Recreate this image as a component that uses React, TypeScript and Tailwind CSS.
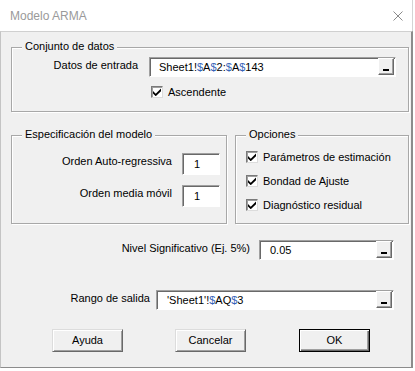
import type { ReactNode } from "react";

function Tick() {
  return (
    <svg width="8" height="8" viewBox="0 0 7 7">
      <polygon points="0,2.6 2.4,5 7,0.4 7,2.8 2.4,7.2 0,4.8" fill="#000" />
    </svg>
  );
}

function CheckBox({ label }: { label: string }) {
  return (
    <div className="flex h-[14px] items-center gap-[5px]">
      <span className="flex h-[12px] w-[12px] items-center justify-center border border-t-[#7a7a7a] border-l-[#7a7a7a] border-r-[#dcdcdc] border-b-[#dcdcdc] bg-white shadow-[inset_1px_1px_0_#a0a0a0]">
        <Tick />
      </span>
      <span className="leading-[13px]">{label}</span>
    </div>
  );
}

function Dots() {
  return (
    <span className="ml-auto mr-[1px] flex h-[17px] w-[16px] shrink-0 items-end justify-center self-start border border-t-white border-l-white border-r-[#696969] border-b-[#696969] bg-[#f0f0f0] pb-[3px] shadow-[inset_-1px_-1px_0_#a0a0a0]">
      <span className="h-[2px] w-[6px] bg-black" />
    </span>
  );
}

function RangeText({ text }: { text: string }) {
  // the $ signs come out bluish in the original (cleartype)
  return (
    <span className="whitespace-pre leading-[13px]">
      {text.split("").map((c, i) =>
        c === "$" ? (
          <span key={i} className="text-[#3563b8]">
            $
          </span>
        ) : (
          c
        )
      )}
    </span>
  );
}

function Group({ title, className, children }: { title: string; className: string; children: ReactNode }) {
  return (
    <div className={`relative border border-[#a8a8a8] shadow-[inset_1px_1px_0_#fff,1px_1px_0_#fff] ${className}`}>
      <span className="absolute left-[10px] top-[-8px] bg-[#f0f0f0] px-[3px] leading-[13px]">{title}</span>
      {children}
    </div>
  );
}

const field =
  "flex items-center border border-t-[#a0a0a0] border-l-[#a0a0a0] border-r-white border-b-white bg-white shadow-[inset_1px_1px_0_#696969]";

const btn =
  "flex h-[23px] w-[71px] items-center justify-center border border-t-[#dcdcdc] border-l-[#dcdcdc] border-r-[#696969] border-b-[#696969] bg-[#f0f0f0] leading-[13px] shadow-[inset_1px_1px_0_#fff,inset_-1px_-1px_0_#a0a0a0]";

export default function App() {
  return (
    <div className="h-[371px] w-[415px] overflow-hidden bg-white font-['Liberation_Sans',Arial,sans-serif] text-[11px] text-black">
      <div className="flex w-[413px] flex-col">
        <div className="flex h-[31px] items-center justify-between border-r border-r-[#d4d4d4] pl-[10px] pr-[9px]">
          <span className="text-[12px] leading-[14px] text-[#9a9a9a]">Modelo ARMA</span>
          <svg width="10" height="10" viewBox="0 0 10 10">
            <path d="M0.5 0.5 L9.5 9.5 M9.5 0.5 L0.5 9.5" stroke="#8a8a8a" strokeWidth="1" />
          </svg>
        </div>

        <div className="flex h-[337px] flex-col border-t border-l border-r-2 border-b border-t-[#d0d0d0] border-l-[#c4c4c4] border-r-[#8c8c8c] border-b-[#8c8c8c] bg-[#f0f0f0]">
          <Group title="Conjunto de datos" className="ml-[10px] mt-[15px] h-[65px] w-[398px] pt-[9px]">
            <div className="flex">
              <span className="w-[126px] pt-[2px] text-right leading-[13px]">Datos de entrada</span>
              <div className={`${field} ml-[11px] h-[20px] w-[247px] pl-[9px]`}>
                <RangeText text="Sheet1!$A$2:$A$143" />
                <Dots />
              </div>
            </div>
            <div className="ml-[139px] mt-[8px]">
              <CheckBox label="Ascendente" />
            </div>
          </Group>

          <div className="ml-[10px] mt-[23px] flex gap-[8px]">
            <Group title="Especificación del modelo" className="h-[89px] w-[216px] pt-[17px]">
              <div className="flex flex-col gap-[10px]">
                <div className="flex">
                  <span className="flex-1 pt-[2px] text-right leading-[13px]">Orden Auto-regressiva</span>
                  <div className={`${field} ml-[10px] mr-[6px] h-[22px] w-[38px] pl-[11px]`}>
                    <span className="leading-[13px]">1</span>
                  </div>
                </div>
                <div className="flex">
                  <span className="flex-1 pt-[2px] text-right leading-[13px]">Orden media móvil</span>
                  <div className={`${field} ml-[10px] mr-[6px] h-[22px] w-[38px] pl-[11px]`}>
                    <span className="leading-[13px]">1</span>
                  </div>
                </div>
              </div>
            </Group>

            <Group title="Opciones" className="h-[89px] w-[174px] pl-[10px] pt-[14px]">
              <div className="flex flex-col gap-[10px]">
                <CheckBox label="Parámetros de estimación" />
                <CheckBox label="Bondad de Ajuste" />
                <CheckBox label="Diagnóstico residual" />
              </div>
            </Group>
          </div>

          <div className="mt-[16px] flex">
            <span className="w-[249px] pt-[2px] text-right leading-[13px]">Nivel Significativo (Ej. 5%)</span>
            <div className={`${field} ml-[9px] h-[20px] w-[135px] pl-[10px]`}>
              <span className="leading-[13px]">0.05</span>
              <Dots />
            </div>
          </div>

          <div className="mt-[30px] flex">
            <span className="w-[149px] pt-[2px] text-right leading-[13px]">Rango de salida</span>
            <div className={`${field} ml-[6px] h-[20px] w-[238px] pl-[10px]`}>
              <RangeText text="'Sheet1'!$AQ$3" />
              <Dots />
            </div>
          </div>

          <div className="ml-[51px] mt-[19px] flex">
            <button className={btn}>Ayuda</button>
            <button className={`${btn} ml-[52px]`}>Cancelar</button>
            <button className="ml-[53px] flex h-[23px] w-[71px] items-center justify-center border border-black bg-[#f0f0f0] leading-[13px] shadow-[inset_1px_1px_0_#fff,inset_-1px_-1px_0_#696969,inset_-2px_-2px_0_#a0a0a0]">
              OK
            </button>
          </div>
        </div>
      </div>
    </div>
  );
}
